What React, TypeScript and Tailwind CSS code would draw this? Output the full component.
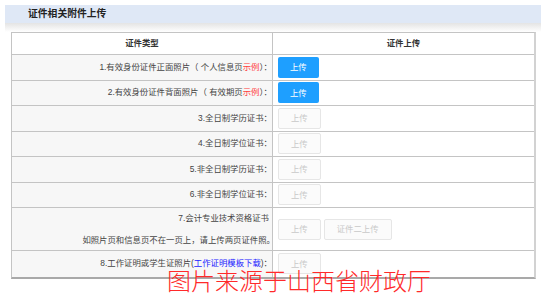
import React from 'react'

const cjk = { fontFamily: '"Liberation Sans", "Noto Sans CJK SC", sans-serif' }

type Row = {
  label: React.ReactNode
  buttons: { text: string; active?: boolean }[]
  tall?: boolean
}

function UploadButton({ text, active }: { text: string; active?: boolean }) {
  if (active) {
    return (
      <button className="h-[21px] px-[12px] min-w-[38px] rounded-[2px] bg-[#1e9fff] text-white text-[8.4px] leading-none">
        {text}
      </button>
    )
  }
  return (
    <button className="h-[21px] px-[12px] min-w-[38px] rounded-[2px] border border-[#e6e6e6] bg-[#fbfbfb] text-[#c9c9c9] text-[8.4px] leading-none">
      {text}
    </button>
  )
}

const rows: Row[] = [
  {
    label: (
      <>
        1.有效身份证件正面照片（ 个人信息页<span className="text-[#ff3b3b]">示例</span> ）：
      </>
    ),
    buttons: [{ text: '上传', active: true }],
  },
  {
    label: (
      <>
        2.有效身份证件背面照片（ 有效期页<span className="text-[#ff3b3b]">示例</span> ）：
      </>
    ),
    buttons: [{ text: '上传', active: true }],
  },
  { label: '3.全日制学历证书：', buttons: [{ text: '上传' }] },
  { label: '4.全日制学位证书：', buttons: [{ text: '上传' }] },
  { label: '5.非全日制学历证书：', buttons: [{ text: '上传' }] },
  { label: '6.非全日制学位证书：', buttons: [{ text: '上传' }] },
  {
    label: (
      <div className="flex flex-col items-end gap-[9px]">
        <span className="mr-[3px]">7.会计专业技术资格证书</span>
        <span className="mr-[-3px]">如照片页和信息页不在一页上，请上传两页证件照。</span>
      </div>
    ),
    buttons: [{ text: '上传' }, { text: '证件二上传' }],
    tall: true,
  },
  {
    label: (
      <>
        8.工作证明或学生证照片(<span className="text-[#1a1aff]">工作证明模板下载</span>)：
      </>
    ),
    buttons: [{ text: '上传' }],
  },
]

export default function App() {
  return (
    <div className="relative w-[546px] h-[294px] bg-white overflow-hidden" style={cjk}>
      <div className="ml-[5px] mr-[5px] mt-[5px] h-[18px] bg-[#dfe8f6] flex items-center pl-[23px]">
        <span className="text-[9.8px] font-bold text-[#222]">证件相关附件上传</span>
      </div>
      <div className="mx-[5px] h-[9px] bg-gradient-to-b from-[#e4e4e4] to-white" />

      <div className="ml-[11px] w-[525px] border border-[#c4c4c4] border-r-[2px] border-r-[#d2d2d2] border-b-[2px] border-b-[#a9a9a9]">
        <div className="flex h-[22px] border-b border-[#c4c4c4] text-[8.4px] font-bold text-[#333]">
          <div className="w-[261px] flex items-center justify-center border-r border-[#c4c4c4]">证件类型</div>
          <div className="flex-1 flex items-center justify-center">证件上传</div>
        </div>
        {rows.map((r, i) => (
          <div
            key={i}
            className={`flex ${r.tall ? 'h-[43px]' : 'h-[25.5px]'} ${i < rows.length - 1 ? 'border-b border-[#c4c4c4]' : ''}`}
          >
            <div className="w-[261px] bg-[#f7f7f7] flex items-center justify-end pr-0 border-r border-[#c4c4c4] text-[8.4px] text-[#444] whitespace-nowrap">
              {r.label}
            </div>
            <div className="flex-1 flex items-center gap-[3px] pl-[5px]">
              {r.buttons.map((b, j) => (
                <UploadButton key={j} text={b.text} active={b.active} />
              ))}
            </div>
          </div>
        ))}
      </div>

      <div
        className="absolute left-[167px] top-[268px] text-[24px] leading-none text-[#ff2a2a] font-light"
        style={{ fontFamily: '"Noto Sans CJK SC", sans-serif' }}
      >
        图片来源于山西省财政厅
      </div>
    </div>
  )
}
